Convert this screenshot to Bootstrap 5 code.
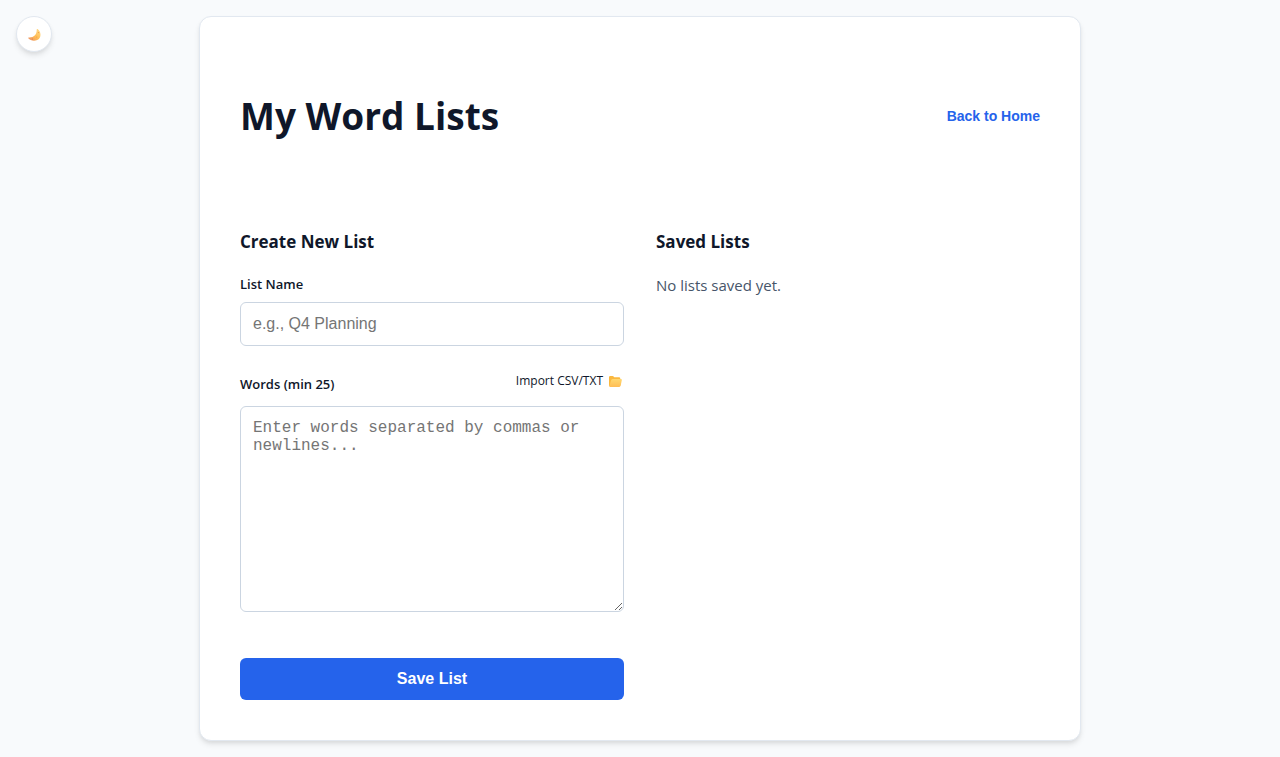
<!DOCTYPE html>
<html lang="en">
<head>
<meta charset="utf-8">
<meta name="viewport" content="width=device-width, initial-scale=1">
<title>My Word Lists</title>
<link href="https://cdn.jsdelivr.net/npm/bootstrap@5.3.0/dist/css/bootstrap.min.css" rel="stylesheet">
<style>
  body { background: #f8fafc; color: #0f172a; font-family: "Segoe UI", "Open Sans", "Noto Sans", sans-serif; }
  .theme-toggle { top: 16px; left: 16px; width: 36px; height: 36px; background: #fff; border: 1px solid #e2e8f0; box-shadow: 0 4px 6px -1px rgba(0,0,0,.1), 0 2px 4px -1px rgba(0,0,0,.06); }
  .panel { max-width: 882px; padding: 40px; background: #fff; border: 1px solid #e2e8f0; border-radius: 12px; box-shadow: 0 4px 6px -1px rgba(0,0,0,.1), 0 2px 4px -1px rgba(0,0,0,.06); }
  .page-title { font-size: 37px; line-height: 60px; font-weight: 700; }
  .page-head { padding-top: 29px; margin-bottom: 82px; }
  .home-link, .form-control, .save-btn { font-family: Arial, "Liberation Sans", sans-serif; }
  .home-link { font-size: 14px; line-height: 22px; font-weight: 700; color: #2563eb; }
  .lists { --bs-gutter-x: 32px; }
  .section-title { font-size: 17px; line-height: 28px; font-weight: 700; margin-bottom: 18px; }
  .field-label { font-size: 13px; line-height: 20px; font-weight: 600; }
  .form-control { padding: 12px; border: 1px solid #cbd5e1; border-radius: 6px; color: #0f172a; font-size: 16px; line-height: 18px; }
  .form-control::placeholder { color: #757575; }
  .name-input { height: 44px; margin-bottom: 24px; }
  .words-input { height: 206px; margin-bottom: 46px; font-family: "Courier New", "Liberation Mono", monospace; }
  .words-head { height: 36px; }
  .import-label { font-size: 12px; line-height: 22px; cursor: pointer; gap: 5px; padding-right: 2px; }
  .save-btn { height: 42px; background: #2563eb; color: #fff; border-radius: 6px; font-size: 16px; line-height: 18px; font-weight: 700; }
  .save-btn:hover { background: #1d4ed8; color: #fff; }
  .empty-note { font-size: 15px; line-height: 22px; color: #475569; }
</style>
</head>
<body>
<button type="button" class="theme-toggle position-absolute rounded-circle d-flex align-items-center justify-content-center p-0" aria-label="Toggle dark mode">
  <svg width="14" height="14" viewBox="0 0 14 14" aria-hidden="true">
    <defs><linearGradient id="moon" x1="1" y1="0" x2="0" y2="1"><stop offset="0" stop-color="#ffdf90"/><stop offset=".5" stop-color="#ffbf57"/><stop offset="1" stop-color="#ea8c64"/></linearGradient></defs>
    <path d="M10.6 2.1C14.6 5 14.4 11 10.2 13.1C7 14.4 3.2 13.6 1.3 11.2C1 10.8 1.2 10.4 1.8 10.4C6.6 10.7 10 7.8 9.7 2.6C9.7 2 10.2 1.8 10.6 2.1Z" fill="url(#moon)"/>
    <circle cx="11.5" cy="5.6" r=".6" fill="#ee9d4b"/><circle cx="9.7" cy="10" r=".6" fill="#f39b49"/><circle cx="5.4" cy="12" r=".6" fill="#e07a50"/>
  </svg>
</button>
<main class="panel mx-auto my-3">
  <header class="page-head d-flex align-items-center justify-content-between">
    <h1 class="page-title mb-0">My Word Lists</h1>
    <a class="home-link text-decoration-none" href="#">Back to Home</a>
  </header>
  <div class="row lists">
    <section class="col-12 col-md-6">
      <h2 class="section-title">Create New List</h2>
      <form>
        <label class="field-label d-block mb-2" for="listName">List Name</label>
        <input type="text" class="form-control name-input" id="listName" placeholder="e.g., Q4 Planning">
        <div class="words-head d-flex justify-content-between">
          <label class="field-label pt-1" for="words">Words (min 25)</label>
          <label class="import-label d-flex align-items-start" for="importFile">Import CSV/TXT
            <svg class="mt-1" width="14" height="14" viewBox="0 0 14 14" aria-hidden="true">
              <defs><linearGradient id="folder" x1="0" y1="0" x2="0" y2="1"><stop offset="0" stop-color="#ffd871"/><stop offset="1" stop-color="#ffbd55"/></linearGradient></defs>
              <path d="M1 3.2Q1 2 2.2 2H4.6Q5.2 2 5.6 2.5L6.3 3.3H11Q12.3 3.3 12.3 4.6V11Q12.3 12.6 11 12.6H2.4Q1 12.6 1 11.2Z" fill="#fab83f"/>
              <path d="M5 5H12.9Q14.1 5 13.8 6.2L12.7 11.6Q12.4 13 11 13H2.5Q1.2 13 1.5 11.7L3 6.4Q3.5 5 5 5Z" fill="url(#folder)"/>
            </svg>
          </label>
          <input type="file" class="d-none" id="importFile" accept=".csv,.txt">
        </div>
        <textarea class="form-control words-input" id="words" placeholder="Enter words separated by commas or newlines..."></textarea>
        <button type="button" class="btn save-btn border-0 w-100">Save List</button>
      </form>
    </section>
    <section class="col-12 col-md-6">
      <h2 class="section-title">Saved Lists</h2>
      <p class="empty-note mb-0">No lists saved yet.</p>
    </section>
  </div>
</main>
<script src="https://cdn.jsdelivr.net/npm/bootstrap@5.3.0/dist/js/bootstrap.bundle.min.js"></script>
</body>
</html>
